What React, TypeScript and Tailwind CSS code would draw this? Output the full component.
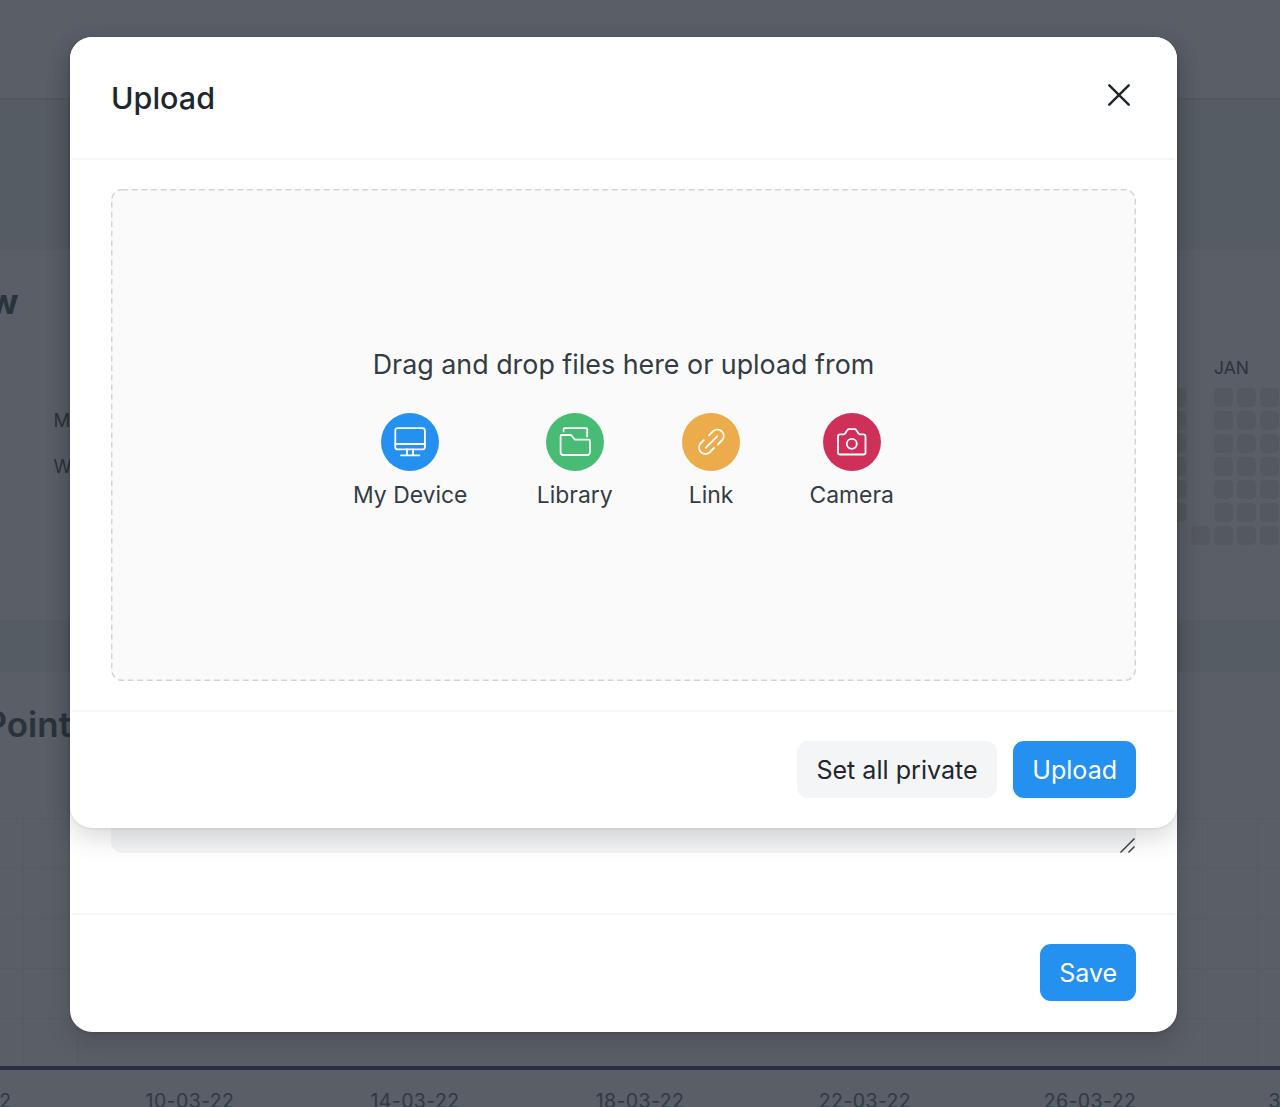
import type { ReactNode } from "react";

const dates = ["06-03-22", "10-03-22", "14-03-22", "18-03-22", "22-03-22", "26-03-22", "30-03-22"];

function HeatColumn({ cells, from = 0 }: { cells: number; from?: number }) {
  return (
    <div className="flex w-[19px] shrink-0 flex-col gap-1">
      {Array.from({ length: 7 }, (_, i) => (
        <div
          key={i}
          className={
            i >= from && i < from + cells ? "h-[19px] rounded-[5px] bg-[#54595f]" : "h-[19px]"
          }
        />
      ))}
    </div>
  );
}

function Dashboard() {
  return (
    <div className="flex h-full flex-col bg-[#5a5e66] text-[#2a333b]">
      <div className="h-[100px] shrink-0 border-b-2 border-[#53585e]" />
      <div className="h-[150px] shrink-0 bg-[#555c63]" />
      <div className="flex h-[370px] shrink-0 flex-col">
        <div className="mt-[31px] flex h-10 w-[18.5px] items-center justify-end text-[35px] font-bold">
          <span>Overview</span>
        </div>
        <div className="mt-[35px] flex justify-between">
          <div className="ml-[53.5px] mt-[41px] flex flex-col text-[18.5px] leading-[46px]">
            <span>M</span>
            <span>W</span>
          </div>
          <div className="flex w-[112px] flex-col">
            <div className="ml-[46px] h-[23px] text-[17.5px] leading-[23px]">JAN</div>
            <div className="mt-[9px] flex gap-1 overflow-hidden">
              <HeatColumn cells={6} />
              <HeatColumn cells={1} from={6} />
              <HeatColumn cells={7} />
              <HeatColumn cells={7} />
              <HeatColumn cells={7} />
            </div>
          </div>
        </div>
      </div>
      <div className="h-[52px] shrink-0 bg-[#565c63]" />
      <div className="h-[146px] shrink-0 pt-[30px]">
        <div className="flex h-11 w-[71px] items-center justify-end text-[35px] font-semibold">
          <span>Point</span>
        </div>
      </div>
      <div className="flex h-[248px] shrink-0 flex-col">
        {[0, 1, 2, 3, 4].map((row) => (
          <div key={row} className="flex h-[50px] shrink-0 justify-between border-t border-[#575b62] pl-[23px] pr-[22px]">
            <div className="w-[55px] border-x border-[#575b62]" />
            <div className="w-[56px] border-x border-[#575b62]" />
          </div>
        ))}
      </div>
      <div className="relative h-[4px] shrink-0 bg-[#2a2e44]" />
      <div className="-ml-[147.5px] flex shrink-0 pt-[19px] text-[19.5px] leading-6 tracking-[0.02em] text-[#2f3a44]">
        {dates.map((d) => (
          <div key={d} className="w-[225px] shrink-0 text-center">
            {d}
          </div>
        ))}
      </div>
    </div>
  );
}

function Icon({ children }: { children: ReactNode }) {
  return (
    <svg
      viewBox="0 0 58 58"
      className="size-[58px]"
      fill="none"
      stroke="white"
      strokeWidth="1.8"
      strokeLinecap="round"
      strokeLinejoin="round"
    >
      {children}
    </svg>
  );
}

function Source({ label, color, children }: { label: string; color: string; children: ReactNode }) {
  return (
    <button className="flex min-w-[58px] flex-col items-center">
      <span className={`rounded-full ${color}`}>
        <Icon>{children}</Icon>
      </span>
      <span className="mt-[7px] whitespace-nowrap text-[22.9px] leading-[34px]">{label}</span>
    </button>
  );
}

const buttonBase = "flex h-[57px] items-center justify-center rounded-[11px] pt-[3px] text-[25.1px]";

function UploadDialog() {
  return (
    <div className="absolute left-[70.4px] top-[37px] flex h-[791px] w-[1106.3px] flex-col rounded-[22px] bg-white shadow-[0_1px_3px_rgba(0,0,0,0.08),0_10px_26px_rgba(0,0,0,0.15)]">
      <div className="mx-[2px] flex h-[122.5px] shrink-0 items-start justify-between border-b-2 border-[#f5f6f7] pl-[38.6px] pr-[45px]">
        <h2 className="mt-[41px] text-[30.5px] font-medium leading-10 text-[#1f272e]">Upload</h2>
        <svg viewBox="0 0 22 22" className="mt-[46.5px] size-[22px]" stroke="#1f272e" strokeWidth="2.4" strokeLinecap="round">
          <path d="M1.3 1.3 20.7 20.7M20.7 1.3 1.3 20.7" />
        </svg>
      </div>
      <div className="flex h-[550.5px] shrink-0 flex-col px-[40.6px] pt-[29.5px]">
        <div className="relative flex h-[492px] w-[1025px] flex-col items-center rounded-[11px] bg-[#fafafa] text-[#333c44]">
          <svg className="absolute inset-0 size-full" fill="none">
            <rect x="0.75" y="0.75" width="1023.5" height="490.5" rx="10.5" stroke="#d2d5d8" strokeWidth="1.5" strokeDasharray="5.8 3.8" />
          </svg>
          <p className="mt-[155px] text-[26.85px] leading-10">Drag and drop files here or upload from</p>
          <div className="mt-[29px] flex gap-[69.4px]">
            <Source label="My Device" color="bg-[#2490ef]">
              <rect x="14.3" y="15.2" width="29.6" height="21.2" rx="2.5" />
              <path d="M14.3 31H43.9M26 36.5v5.8M32 36.5v5.8M20 42.3h18.4" />
            </Source>
            <Source label="Library" color="bg-[#48bb74]">
              <path d="M17.6 18.4V16.2Q17.6 15.2 18.6 15.2H40.2Q41.2 15.2 41.2 16.2V23.4" />
              <path d="M14.6 23.2Q14.6 22 15.8 22H24.3Q25 22 25.5 22.5L28.5 26.1Q29 26.7 29.8 26.7H42.7Q43.9 26.7 43.9 27.9V39.2Q43.9 42 41.1 42H17.4Q14.6 42 14.6 39.2Z" />
            </Source>
            <Source label="Link" color="bg-[#ecac4b]">
              <path d="M21.8 27.2 18.5 30.5A6.4 6.4 0 0 0 27.5 39.5L32 35M27 22.3 31.3 18A6.4 6.4 0 0 1 40.3 27L35.8 31.5M23.7 34.8 35.2 23.3" />
            </Source>
            <Source label="Camera" color="bg-[#cf3059]">
              <path d="M16.8 21.3H20.7Q21.6 21.3 22.1 20.6L24.4 17Q24.9 16.2 25.8 16.2H31.8Q32.7 16.2 33.2 17L35.5 20.6Q36 21.3 36.9 21.3H40.4Q42.5 21.3 42.5 23.4V39.4Q42.5 41.5 40.4 41.5H17.1Q15 41.5 15 39.4V23.4Q15 21.3 17.1 21.3Z" />
              <circle cx="28.8" cy="30.8" r="5" />
            </Source>
          </div>
        </div>
      </div>
      <div className="mx-[2px] flex h-[118px] shrink-0 items-start justify-end gap-4 border-t-2 border-[#f5f6f7] pr-[38.3px] pt-[29px]">
        <button className={`${buttonBase} w-[200px] bg-[#f4f5f6] text-[#1f272e]`}>Set all private</button>
        <button className={`${buttonBase} w-[123.4px] bg-[#2490ef] text-white`}>Upload</button>
      </div>
    </div>
  );
}

function EditDialog() {
  return (
    <div className="absolute left-[70.4px] top-[37px] flex h-[994.5px] w-[1106.3px] flex-col justify-end overflow-hidden rounded-[22px] bg-white shadow-[0_1px_3px_rgba(0,0,0,0.15),0_10px_24px_rgba(0,0,0,0.15)]">
      <div className="mx-[40.6px] flex h-[60px] shrink-0 items-end justify-end rounded-b-[11px] bg-[#f4f5f6]">
        <svg viewBox="0 0 15 15" className="mr-px size-[15px]" stroke="#333" strokeWidth="1.4">
          <path d="M.5 14.5 14.5.5M8.5 14.5 14.5 8.5" />
        </svg>
      </div>
      <div className="mx-[2px] mt-[60px] flex h-[118.5px] shrink-0 items-start justify-end border-t-2 border-[#f5f6f7] pr-[38.3px] pt-[29px]">
        <button className={`${buttonBase} w-[96.4px] bg-[#2490ef] text-white`}>Save</button>
      </div>
    </div>
  );
}

export default function App() {
  return (
    <div className="relative h-[1107px] w-[1280px] overflow-hidden font-['Inter',sans-serif]">
      <Dashboard />
      <EditDialog />
      <UploadDialog />
    </div>
  );
}
